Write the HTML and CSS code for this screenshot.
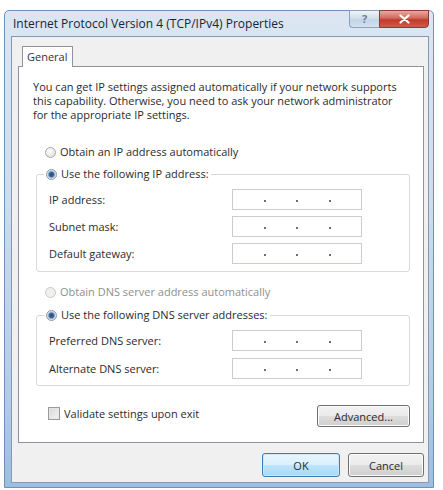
FILE: index.html
```html
<!DOCTYPE html>
<html>
<head>
<meta charset="utf-8">
<link rel="stylesheet" href="styles.css">
</head>
<body>
<div class="window">
  <div class="titlebar">
    <span class="title">Internet Protocol Version 4 (TCP/IPv4) Properties</span>
    <div class="caption-buttons">
      <span class="cap-help">?</span>
      <span class="cap-close"><svg width="11" height="10" viewBox="0 0 11 10"><path d="M1.5 1.5 L9.5 8.5 M9.5 1.5 L1.5 8.5" stroke="#fff" stroke-width="2.2" stroke-linecap="round"/></svg></span>
    </div>
  </div>
  <div class="client">
    <div class="tabs"><span class="tab">General</span></div>
    <div class="panel">
      <p class="intro">You can get IP settings assigned automatically if your network supports<br>this capability. Otherwise, you need to ask your network administrator<br>for the appropriate IP settings.</p>
      <div class="option first"><span class="radio"></span>Obtain an IP address automatically</div>
      <fieldset class="group">
        <legend class="option"><span class="radio checked"></span>Use the following IP address:</legend>
        <div class="field"><span class="label">IP address:</span><span class="ipbox"><i></i><i></i><i></i></span></div>
        <div class="field"><span class="label">Subnet mask:</span><span class="ipbox"><i></i><i></i><i></i></span></div>
        <div class="field"><span class="label">Default gateway:</span><span class="ipbox"><i></i><i></i><i></i></span></div>
      </fieldset>
      <div class="option dns disabled"><span class="radio"></span>Obtain DNS server address automatically</div>
      <fieldset class="group dnsgroup">
        <legend class="option"><span class="radio checked"></span>Use the following DNS server addresses:</legend>
        <div class="field"><span class="label">Preferred DNS server:</span><span class="ipbox"><i></i><i></i><i></i></span></div>
        <div class="field"><span class="label">Alternate DNS server:</span><span class="ipbox"><i></i><i></i><i></i></span></div>
      </fieldset>
      <div class="bottom-row">
        <span class="check"><span class="checkbox"></span>Validate settings upon exit</span>
        <span class="button advanced">Advanced...</span>
      </div>
    </div>
    <div class="dialog-buttons">
      <span class="button default ok">OK</span>
      <span class="button cancel">Cancel</span>
    </div>
  </div>
</div>
</body>
</html>
```

FILE: styles.css
```css
* { box-sizing: border-box; }
body {
  margin: 0;
  background: #fff;
  font-family: "Open Sans", "Noto Sans", sans-serif;
  font-size: 11px;
  color: #2b2b2b;
}
.window {
  margin: 10px 0 0 4px;
  width: 430px;
  height: 478px;
  border: 1px solid #6f90b9;
  border-radius: 5px 5px 0 0;
  background: linear-gradient(to bottom, #dbe6f2 0%, #cddcee 40%, #b4cce8 80%, #9dbde3 100%);
  padding: 0 4px 4px 6px;
  display: flex;
  flex-direction: column;
}
.titlebar {
  height: 26px;
  display: flex;
  justify-content: space-between;
  align-items: flex-start;
}
.title {
  font-size: 12px;
  color: #1a2433;
  padding-left: 2px;
  line-height: 25px;
}
.caption-buttons {
  display: flex;
  margin-top: -1px;
}
.cap-help {
  width: 30px;
  height: 18px;
  border: 1px solid #8ba0bb;
  border-right: none;
  border-radius: 0 0 0 4px;
  background: linear-gradient(#eef3f9, #cfdcea 50%, #c2d3e6 51%, #d4e1ef);
  color: #6a7f9b;
  font-weight: bold;
  font-size: 11px;
  text-align: center;
  line-height: 16px;
}
.cap-close {
  width: 50px;
  height: 18px;
  border: 1px solid #8b3a34;
  border-radius: 0 0 4px 0;
  background: linear-gradient(#e8a99f, #d0685c 45%, #c2392c 55%, #d05a4a);
  display: flex;
  align-items: center;
  justify-content: center;
}
.client {
  flex: 1;
  background: #f0f0f0;
  border: 1px solid #8799b0;
  padding: 9px 4px 5px 6px;
  display: flex;
  flex-direction: column;
}
.tabs {
  display: flex;
  padding-left: 4px;
  margin-bottom: -1px;
}
.tab {
  position: relative;
  z-index: 1;
  height: 21px;
  width: 51px;
  border: 1px solid #8e939c;
  border-bottom: none;
  background: #fff;
  padding-left: 4px;
  line-height: 19px;
  color: #333;
}
.panel {
  height: 377px;
  border: 1px solid #8e939c;
  background: #fff;
  padding: 13px 13px 0 14px;
  display: flex;
  flex-direction: column;
}
.intro {
  margin: 0;
  line-height: 14px;
}
.option {
  display: flex;
  align-items: center;
  height: 14px;
  line-height: 14px;
}
.option.first { margin: 23px 0 0 12px; }
.option.dns { margin: 13px 0 0 12px; }
.option.disabled { color: #8f8f8f; }
.radio {
  width: 11px;
  height: 11px;
  border-radius: 50%;
  border: 1px solid #a8a8a8;
  background: radial-gradient(circle at 40% 35%, #fdfdfd, #dadada);
  margin-right: 4px;
  flex: none;
}
.disabled .radio { border-color: #c8c8c8; background: #f0f0f0; }
.radio.checked {
  border-color: #8a98ab;
  background: radial-gradient(circle, #2b4f7c 0, #3a6394 2.2px, #a9bfd8 3.4px, #eef3f8 4.6px);
}
.group {
  margin: 8px 0 0 3px;
  border: 1px solid #d6d9de;
  border-radius: 3px;
  padding: 8px 0 7px 12px;
  min-width: 0;
}
.group legend {
  padding: 0 2px;
  margin-left: -5px;
}
.field {
  display: flex;
  align-items: center;
  height: 21px;
}
.field + .field { margin-top: 6px; }
.dnsgroup { margin-top: 9px; padding-bottom: 6px; }
.dnsgroup .field + .field { margin-top: 7px; }
.label {
  width: 183px;
  flex: none;
}
.ipbox {
  width: 130px;
  height: 21px;
  border: 1px solid #c9ccd1;
  background: #fff;
  display: flex;
  justify-content: space-evenly;
  align-items: center;
  padding-top: 3px;
}
.ipbox i {
  width: 2px;
  height: 2px;
  background: #6c6c6c;
}
.bottom-row {
  margin-top: 19px;
  display: flex;
  justify-content: space-between;
  align-items: flex-start;
}
.check {
  display: flex;
  align-items: center;
  height: 14px;
  padding-left: 15px;
  margin-top: 1px;
}
.checkbox {
  width: 12px;
  height: 13px;
  border: 1px solid #9a9a9a;
  background: linear-gradient(135deg, #d7d7d7, #f4f4f4);
  box-shadow: inset 0 0 0 1px #e6e6e6;
  margin-right: 4px;
}
.button {
  display: flex;
  align-items: center;
  justify-content: center;
  border: 1px solid #707070;
  border-radius: 3px;
  background: linear-gradient(#f2f2f2 0%, #ebebeb 49%, #dddddd 50%, #cfcfcf 100%);
  box-shadow: inset 0 0 0 1px #fbfbfb;
  color: #2b2b2b;
}
.advanced {
  width: 93px;
  height: 22px;
  margin-right: 0;
}
.dialog-buttons {
  margin-top: 10px;
  display: flex;
  justify-content: flex-end;
  gap: 8px;
}
.ok { width: 78px; height: 24px; }
.cancel { width: 76px; height: 24px; }
.button.default {
  border-color: #3c7fb1;
  background: linear-gradient(#eaf6fd 0%, #d9f0fc 49%, #bee6fd 50%, #a7d9f5 100%);
  box-shadow: inset 0 0 0 1px #c8e8fb;
}
```
